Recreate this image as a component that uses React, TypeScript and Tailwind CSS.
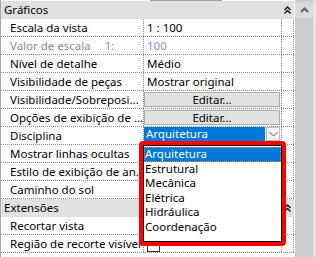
import React from "react";

const F = "font-['Noto_Sans','Open_Sans',sans-serif]";

function Header({ label, icon = true }: { label: string; icon?: boolean }) {
  return (
    <div className="flex h-[18px] items-center bg-[#e1e1e1]">
      <div className="flex-1 pl-[3px] leading-[18px] text-black">{label}</div>
      {icon && (
        <div className="flex w-[11px] items-center justify-center pr-[2px]">
          <svg width="7" height="8" viewBox="0 0 7 8">
            <polyline points="0.5,4 3.5,1 6.5,4" fill="none" stroke="#111" strokeWidth="1.4" />
            <polyline points="0.5,7.5 3.5,4.5 6.5,7.5" fill="none" stroke="#111" strokeWidth="1.4" />
          </svg>
        </div>
      )}
    </div>
  );
}

function Row({
  name,
  children,
  nameClass = "text-black",
}: {
  name: React.ReactNode;
  children?: React.ReactNode;
  nameClass?: string;
}) {
  return (
    <div className="flex h-[18px] border-b border-dotted border-[#8a8a8a]">
      <div
        className={`w-[143px] shrink-0 overflow-hidden whitespace-nowrap border-r border-dotted border-[#8a8a8a] pl-[9px] leading-[17px] ${nameClass}`}
      >
        {name}
      </div>
      <div className="relative w-[138px] shrink-0 overflow-hidden whitespace-nowrap border-r border-dotted border-[#8a8a8a] leading-[17px]">
        {children}
      </div>
      <div className="w-[12px] shrink-0 border-r border-dotted border-[#8a8a8a]" />
    </div>
  );
}

function Button() {
  return (
    <div className="mt-[1px] flex h-[15px] w-[136px] items-center justify-center border border-[#adadad] bg-[#e1e1e1] text-black leading-[13px]">
      Editar...
    </div>
  );
}

function Check() {
  return <div className="ml-[3px] mt-[4px] h-[13px] w-[13px] border border-[#333] bg-white" />;
}

export default function App() {
  const items = ["Arquitetura", "Estrutural", "Mecânica", "Elétrica", "Hidráulica", "Coordenação"];
  return (
    <div className={`relative h-[257px] w-[316px] overflow-hidden bg-white text-[11.5px] ${F}`}>
      <div className="absolute left-[150px] top-0 h-[1px] w-[72px] bg-[#a0a0a0]" />
      <div className="flex h-full">
        <div className="w-[294px] shrink-0 border-l border-[#a8a8a8] pt-[1px]">
          <Header label="Gráficos" />
          <Row name="Escala da vista">
            <span className="pl-[3px] text-black">1 : 100</span>
          </Row>
          <Row
            name={
              <span className="flex">
                <span>Valor de escala</span>
                <span className="ml-[14px]">1:</span>
              </span>
            }
            nameClass="text-[#8c8c8c]"
          >
            <span className="pl-[3px] text-[#7d97c6]">100</span>
          </Row>
          <Row name="Nível de detalhe">
            <span className="pl-[3px] text-black">Médio</span>
          </Row>
          <Row name="Visibilidade de peças">
            <span className="pl-[3px] text-black">Mostrar original</span>
          </Row>
          <Row name="Visibilidade/Sobreposi...">
            <Button />
          </Row>
          <Row name="Opções de exibição de ...">
            <Button />
          </Row>
          <Row name="Disciplina">
            <div className="flex h-[14px]">
              <div className="w-[121px] bg-[#0078d7] pl-[2px] leading-[14px] text-white">Arquitetura</div>
              <div className="ml-[1px] flex h-[14px] w-[14px] items-center justify-center border border-[#b8b8b8] bg-[#f4f4f4]">
                <svg width="9" height="6" viewBox="0 0 9 6">
                  <polyline points="0.5,1 4.5,5 8.5,1" fill="none" stroke="#555" strokeWidth="1" />
                </svg>
              </div>
            </div>
          </Row>
          <Row name="Mostrar linhas ocultas" />
          <Row name="Estilo de exibição de an..." />
          <Row name="Caminho do sol">
            <Check />
          </Row>
          <Header label="Extensões" />
          <Row name="Recortar vista">
            <Check />
          </Row>
          <Row name="Região de recorte visível">
            <Check />
          </Row>
        </div>
        <div className="ml-[1px] flex w-[18px] shrink-0 flex-col bg-[#cdcdcd] pt-[2px]">
          <div className="flex h-[16px] items-center justify-center bg-[#dadada]">
            <svg width="9" height="6" viewBox="0 0 9 6">
              <polyline points="1,5 4.5,1.5 8,5" fill="none" stroke="#606060" strokeWidth="2" />
            </svg>
          </div>
        </div>
        <div className="w-[3px] shrink-0 bg-[#e6e6e6]" />
      </div>

      <div className="absolute left-[139px] top-[141px] h-[105px] w-[147px] rounded-[4px] border-[4px] border-[#ff0000]">
        <div className="h-full w-full border border-black bg-white pt-[1px]">
          {items.map((it, i) => (
            <div
              key={it}
              className={
                i === 0
                  ? "h-[14.5px] bg-[#0078d7] pl-[1px] leading-[14.5px] text-white outline-1 outline-dotted outline-[#ff8728] -outline-offset-1"
                  : "h-[14.5px] pl-[1px] leading-[14.5px] text-black"
              }
            >
              {it}
            </div>
          ))}
        </div>
      </div>
    </div>
  );
}
